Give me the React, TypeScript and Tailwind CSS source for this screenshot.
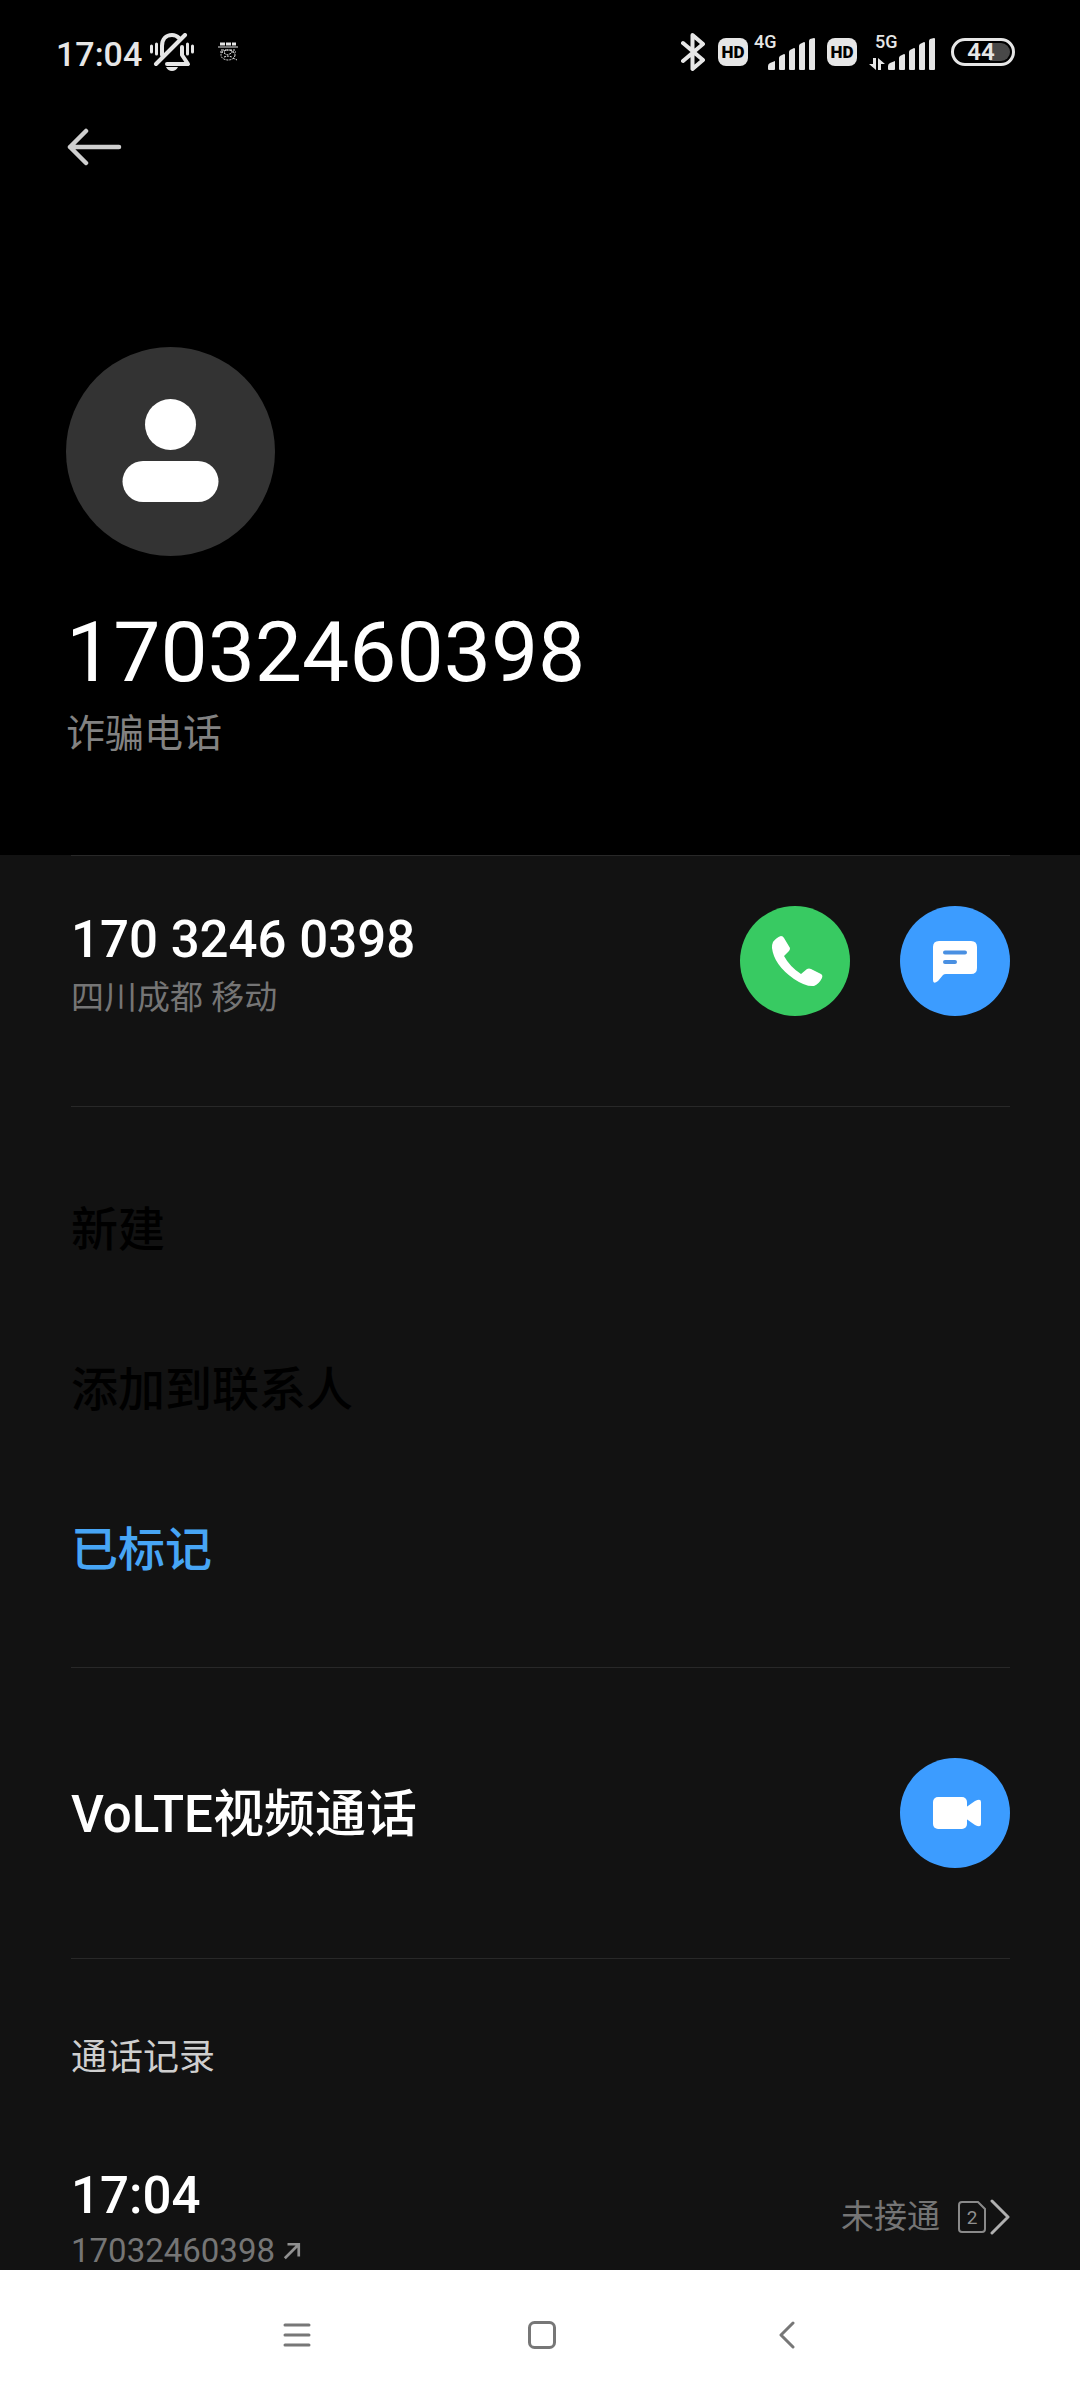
import React from "react"

const BARS = [
  "M1 31v-3q0-2 2-3l5-2v8q0 1-1 1H2q-1 0-1-1z",
  "M12 31V20q0-1 1-2l4-2q1 0 1 1v14q0 1-1 1h-4q-1 0-1-1z",
  "M22 31V14q0-1 1-2l4-2q1 0 1 1v20q0 1-1 1h-4q-1 0-1-1z",
  "M32 31V8q0-1 1-2l4-2q1 0 1 1v26q0 1-1 1h-4q-1 0-1-1z",
  "M42 31V3q0-1 1-2l4-1q1 0 1 1v30q0 1-1 1h-4q-1 0-1-1z",
]

function HdBadge() {
  return (
    <span className="flex h-7 w-[30px] items-center justify-center rounded-lg bg-[#e6e6e6] text-[17px] leading-none font-black text-black">
      HD
    </span>
  )
}

function Signal({ label, active }: { label: string; active?: boolean }) {
  return (
    <span className={`relative flex h-9 items-end justify-end ${active ? "w-[66px]" : "w-[61px]"}`}>
      <span className={`absolute top-0 text-[18px] leading-4 font-medium ${active ? "left-1.5" : "left-0"}`}>{label}</span>
      {active && (
        <svg className="absolute bottom-0 left-0 h-3 w-4" viewBox="0 0 16 12" fill="currentColor">
          <path d="M4 0h3v12L0 6h4zM9 0l7 6h-4v6H9z" />
        </svg>
      )}
      <svg className="h-8 w-12" viewBox="0 0 48 32" fill="currentColor">
        {BARS.map((d) => (
          <path key={d} d={d} />
        ))}
      </svg>
    </span>
  )
}

function StatusBar() {
  return (
    <div className="flex h-[104px] items-center justify-between pr-[65px] pl-14 text-[#e6e6e6]">
      <div className="flex items-center">
        <span className="pt-1 text-[34px] leading-10 font-medium">17:04</span>
        <svg className="ml-2 h-[38px] w-11" viewBox="0 0 44 38" fill="none" stroke="currentColor" strokeLinecap="round" strokeLinejoin="round">
          <path strokeWidth="3" d="M1.500 13v6M6.500 11v10M37.500 11v10M42.500 13v6" />
          <path strokeWidth="4" d="M12 22V13C12 6 16 2 22 2c3 0 5 1 7 3M32 14v8l6 9H17" />
          <path strokeWidth="4" d="M6 31L35 2" />
          <path fill="currentColor" stroke="none" d="M16 34h12q-2 4-6 4t-6-4z" />
        </svg>
        <svg className="ml-6 h-5 w-5" viewBox="0 0 20 20" fill="none" stroke="currentColor">
          <path strokeWidth="3" strokeDasharray="5 1" d="M2 2h16" />
          <path d="M0 5h20" />
          <path strokeDasharray="3 1" d="M3 8h14M2 10h5M13 10h5" />
          <ellipse cx="10" cy="13" rx="7" ry="5" strokeDasharray="2 1" />
          <path strokeDasharray="2 1" d="M6 11l3 2 5-2M6 15l4-1 4 1M15 16l4 2" />
        </svg>
      </div>
      <div className="flex items-center">
        <svg className="h-10 w-[25px]" viewBox="0 0 25 40" fill="none" stroke="currentColor" strokeWidth="4" strokeLinecap="round" strokeLinejoin="round">
          <path d="M2 11L22 28 11.500 37V3L22 12 2 29" />
        </svg>
        <span className="ml-3">
          <HdBadge />
        </span>
        <span className="ml-1.5">
          <Signal label="4G" />
        </span>
        <span className="ml-3">
          <HdBadge />
        </span>
        <span className="ml-3">
          <Signal label="5G" active />
        </span>
        <span className="relative ml-4 flex h-7 w-16 items-center justify-center rounded-full border-3 border-[#e6e6e6]">
          <span className="absolute top-[2px] right-[2px] bottom-[2px] w-5 rounded-r-full bg-[#484848]" />
          <span className="relative pr-1 text-[24px] leading-none font-semibold">44</span>
        </span>
      </div>
    </div>
  )
}

function RoundButton({ label, color, children }: { label: string; color: string; children: React.ReactNode }) {
  return (
    <button type="button" aria-label={label} className={`h-[110px] w-[110px] shrink-0 rounded-full text-white ${color}`}>
      <svg className="h-full w-full" viewBox="0 0 110 110" fill="currentColor">
        {children}
      </svg>
    </button>
  )
}

export default function App() {
  return (
    <div className="flex min-h-screen flex-col bg-[#121212] font-[Roboto,'Noto_Sans_CJK_SC',sans-serif] text-white">
      <header className="bg-black pb-[97px]">
        <StatusBar />
        <div className="flex flex-col items-start px-[66px]">
          <button type="button" aria-label="返回" className="flex h-[86px] items-center text-[#cfcfcf]">
            <svg className="h-[38px] w-14" viewBox="0 0 56 38" fill="none" stroke="currentColor" strokeWidth="4.500" strokeLinecap="round" strokeLinejoin="round">
              <path d="M20 3L4 19l16 16M4 19h49" />
            </svg>
          </button>
          <svg className="mt-[157px] h-[209px] w-[209px]" viewBox="0 0 209 209">
            <circle cx="104.500" cy="104.500" r="104.500" fill="#333" />
            <circle cx="104.500" cy="77.500" r="25.500" fill="#fff" />
            <rect x="56.500" y="114" width="96" height="41" rx="20.500" fill="#fff" />
          </svg>
          <h1 className="mt-12 text-[84px] leading-[98px]">17032460398</h1>
          <p className="mt-2 text-[39px] leading-12 text-[#828282]">诈骗电话</p>
        </div>
      </header>

      <main className="flex-1 pr-[70px] pl-[71px]">
        <section className="flex items-start justify-between border-t border-[#282828] pt-[50px] pb-[86px]">
          <div className="pt-1.5">
            <h2 className="text-[51px] leading-14 font-medium">170 3246 0398</h2>
            <p className="mt-2 text-[33px] leading-11 text-[#757575]">四川成都 移动</p>
          </div>
          <div className="flex gap-[50px]">
            <RoundButton label="拨打电话" color="bg-[#38ca62]">
              <path d="M33 36q4-5 8-6 2 0 3 2l6 10q0 2-1 3l-5 5q6 11 17 18l6-5q2-1 4 0l10 5q2 1 1 4-3 6-8 8-8 1-20-7Q34 59 32 42q0-4 1-6z" />
            </RoundButton>
            <RoundButton label="发送短信" color="bg-[#3c9cff]">
              <path d="M39 35h32q6 0 6 6v21q0 6-6 6H46q-2 0-3 1l-5 6q-5 4-5-1V41q0-6 6-6z" />
              <path stroke="#4a90e2" strokeWidth="4" strokeLinecap="round" d="M45 46.500h20M45 56h10" />
            </RoundButton>
          </div>
        </section>

        <section className="flex flex-col border-t border-[#282828] pt-[43px] pb-[37px] text-[47px] leading-14 font-medium">
          <button type="button" className="h-40 text-left text-black">新建</button>
          <button type="button" className="h-40 text-left text-black">添加到联系人</button>
          <button type="button" className="h-40 text-left text-[#47a5f5]">已标记</button>
        </section>

        <section className="flex items-center justify-between border-t border-[#282828] pt-[90px] pb-[90px]">
          <h2 className="pt-1 text-[51px] leading-14 font-medium">VoLTE视频通话</h2>
          <RoundButton label="视频通话" color="bg-[#3c9cff]">
            <rect x="33" y="39" width="34" height="32" rx="5" />
            <path d="M65 50l10-7q6-3 6 1v22q0 4-6 1l-10-7z" />
          </RoundButton>
        </section>

        <section className="border-t border-[#282828] pt-[75px]">
          <h3 className="text-[36px] leading-12 text-[#cfcfcf]">通话记录</h3>
          <div className="mt-[86px] flex items-center justify-between">
            <div>
              <p className="text-[51px] leading-14 font-medium">17:04</p>
              <p className="mt-2 flex items-center gap-2 text-[33px] leading-[38px] text-[#757575]">
                17032460398
                <svg className="h-[18px] w-[18px]" viewBox="0 0 20 20" fill="none" stroke="#909090" strokeWidth="3">
                  <path d="M2 18L17 3M5 2.500h12.500V16" />
                </svg>
              </p>
            </div>
            <button type="button" aria-label="通话详情" className="flex items-center pb-1 text-[33px] leading-11 text-[#757575]">
              未接通
              <span className="relative ml-[18px] flex h-8 w-7 items-center justify-center text-[19px] leading-none text-[#909090]">
                <svg className="absolute inset-0 h-full w-full" viewBox="0 0 28 32" fill="none" stroke="#8a8a8a" strokeWidth="2">
                  <path d="M4 1h16l7 7v20q0 3-3 3H4q-3 0-3-3V4q0-3 3-3z" />
                </svg>
                2
              </span>
              <svg className="ml-1 h-9 w-5" viewBox="0 0 20 36" fill="none" stroke="#b0b0b0" strokeWidth="3" strokeLinecap="round" strokeLinejoin="round">
                <path d="M2 2l16 16L2 34" />
              </svg>
            </button>
          </div>
        </section>
      </main>

      <nav className="bg-white text-[#777]">
        <div className="mx-auto grid h-[130px] max-w-[738px] grid-cols-3 pl-1">
          <button type="button" aria-label="最近任务" className="flex items-center justify-center">
            <svg className="h-7 w-7" viewBox="0 0 28 28" fill="none" stroke="currentColor" strokeWidth="3" strokeLinecap="round">
              <path d="M2 4h24M2 14h24M2 24h24" />
            </svg>
          </button>
          <button type="button" aria-label="主屏幕" className="flex items-center justify-center">
            <svg className="h-7 w-7" viewBox="0 0 28 28" fill="none" stroke="currentColor" strokeWidth="3">
              <rect x="1.500" y="1.500" width="25" height="25" rx="5" />
            </svg>
          </button>
          <button type="button" aria-label="返回上一页" className="flex items-center justify-center">
            <svg className="h-7 w-4" viewBox="0 0 16 28" fill="none" stroke="currentColor" strokeWidth="3" strokeLinecap="round" strokeLinejoin="round">
              <path d="M14 2L2 14l12 12" />
            </svg>
          </button>
        </div>
      </nav>
    </div>
  )
}
